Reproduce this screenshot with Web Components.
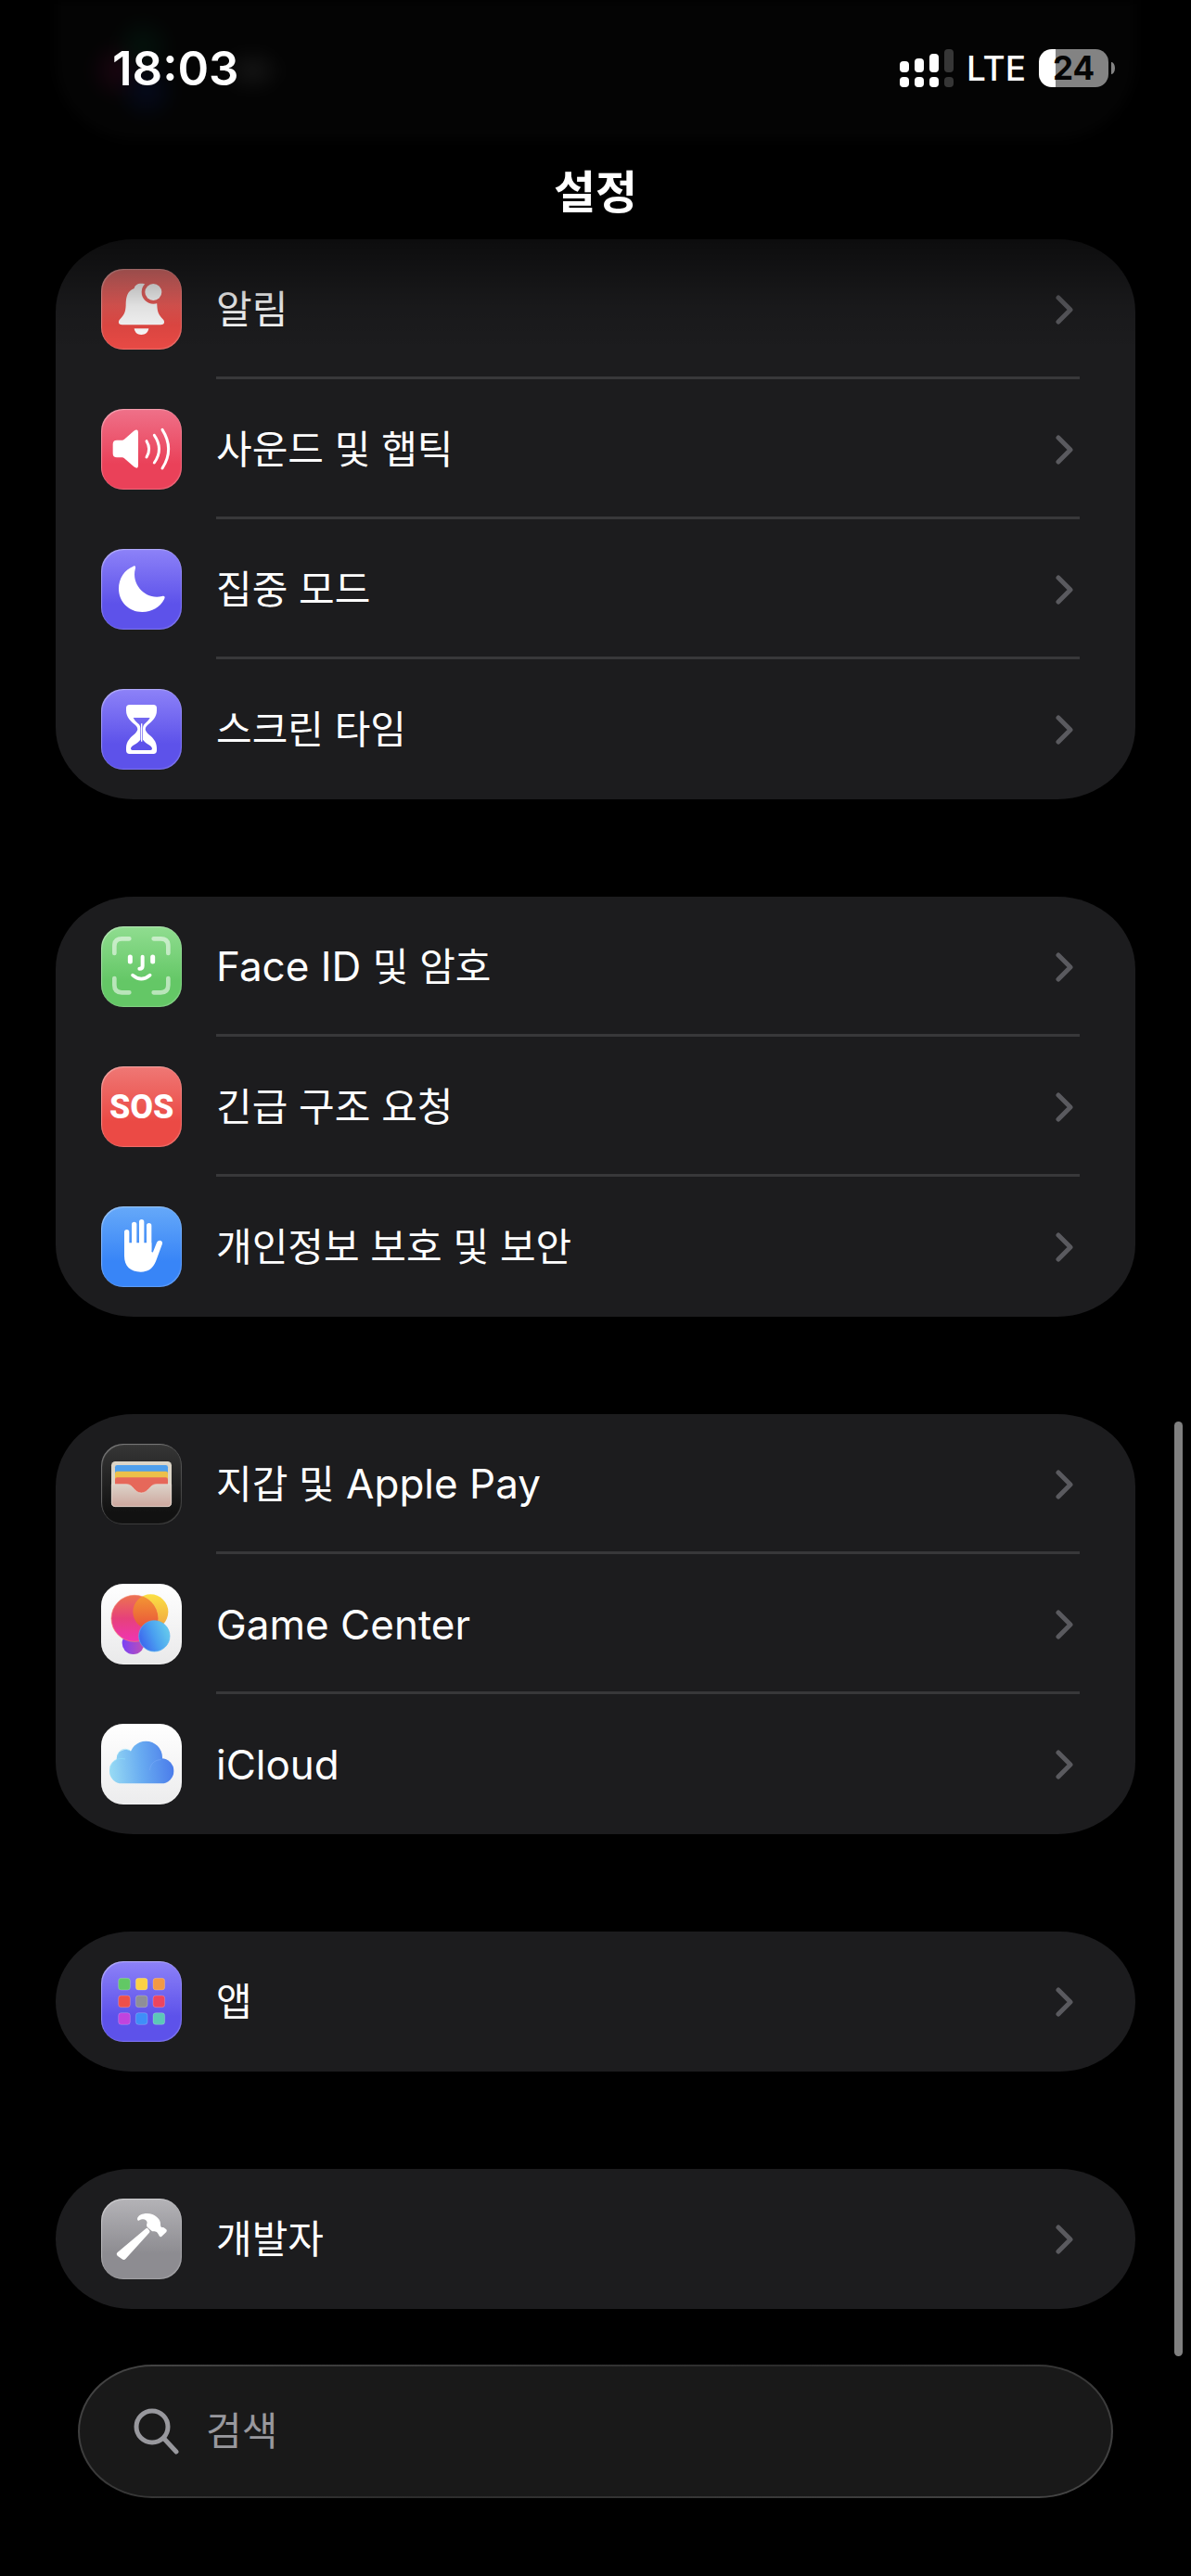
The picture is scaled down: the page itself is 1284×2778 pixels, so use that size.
<!DOCTYPE html>
<html lang="ko">
<head>
<meta charset="utf-8">
<meta name="viewport" content="width=device-width, initial-scale=1">
<title>설정</title>
<style>
    :root {
        --card-color: #1c1c1e;
        --separator-color: #38383a;
        --muted-color: #98989d;
        --hangul-size: 42px;
        --latin-size: 44px;
    }

    body {
        margin: 0;
        background: #000;
        color: #fff;
        font-family: "Inter", "Noto Sans CJK KR", sans-serif;
    }
</style>
</head>
<body>
<settings-screen>
    <status-bar slot="status" time="18:03" network="LTE" battery="24"></status-bar>
    <span slot="title">설정</span>

    <settings-group>
        <settings-row icon="bell"><span lang="ko">알림</span></settings-row>
        <settings-row icon="sound"><span lang="ko">사운드 및 햅틱</span></settings-row>
        <settings-row icon="moon"><span lang="ko">집중 모드</span></settings-row>
        <settings-row icon="hourglass"><span lang="ko">스크린 타임</span></settings-row>
    </settings-group>

    <settings-group>
        <settings-row icon="faceid">Face ID <span lang="ko">및 암호</span></settings-row>
        <settings-row icon="sos"><span lang="ko">긴급 구조 요청</span></settings-row>
        <settings-row icon="hand"><span lang="ko">개인정보 보호 및 보안</span></settings-row>
    </settings-group>

    <settings-group>
        <settings-row icon="wallet"><span lang="ko">지갑 및</span> Apple Pay</settings-row>
        <settings-row icon="game">Game Center</settings-row>
        <settings-row icon="cloud">iCloud</settings-row>
    </settings-group>

    <settings-group>
        <settings-row icon="apps"><span lang="ko">앱</span></settings-row>
    </settings-group>

    <settings-group>
        <settings-row icon="hammer"><span lang="ko">개발자</span></settings-row>
    </settings-group>

    <search-field slot="search" placeholder="검색"></search-field>
</settings-screen>

<script>
// tile background and artwork for every icon, drawn on a 261 x 261 grid
const ICONS = {
    bell: {
        tile: 'linear-gradient(#ee7674, #e94a45 70%)',
        art: `
            <mask id="cut"><rect width="261" height="261" fill="#fff"/><circle cx="169" cy="75" r="38" fill="#000"/></mask>
            <path mask="url(#cut)" d="M68 181C57 181 53 172 61 163C73 151 79 142 80 118C80 90 85 71 107 63C109 53 117 47 130 47C143 47 150 53 153 63C176 71 180 90 181 118C182 142 188 151 200 163C208 172 204 181 193 181Z"/>
            <circle cx="169" cy="75" r="27"/>
            <path d="M107 193H154C152 206 143 213 130 213S109 206 107 193Z"/>`
    },
    sound: {
        tile: 'linear-gradient(#ef7189, #ea4159 68%)',
        art: `
            <path d="M38 114Q38 101 51 101H68Q72 101 75 98L105 72Q120 62 120 76V183Q120 197 106 187L75 160Q72 157 68 157H51Q38 157 38 144Z"/>
            <g fill="none" stroke="#fff" stroke-width="9" stroke-linecap="round">
                <path d="M147 104Q163 130 147 156"/>
                <path d="M172 85Q203 130 172 174"/>
                <path d="M198 67Q238 130 198 192"/>
            </g>`
    },
    moon: {
        tile: 'linear-gradient(#8d82f8, #5d52ea 68%)',
        art: `<path d="M104 56C111 53 113 58 110 66C98 116 145 166 197 153C206 151 208 156 204 163C191 188 165 204 133 204C90 204 57 171 57 129C57 95 76 67 104 56Z"/>`
    },
    hourglass: {
        tile: 'linear-gradient(#8d82f8, #5d52ea 68%)',
        art: `
            <path fill-rule="evenodd" d="M92 51H169Q180 51 180 62V70C180 92 164 106 150 117Q143 123 143 130Q143 137 150 143C166 156 180 169 180 191V199Q180 210 169 210H92Q81 210 81 199V191C81 169 95 156 111 143Q118 137 118 130Q118 123 111 117C97 106 81 92 81 70V62Q81 51 92 51ZM104 93H158C152 104 145 109 139 115Q135 119 135 127V164C144 178 165 182 165 193Q165 198 160 198H101Q96 198 96 193C96 182 118 178 127 164V127Q127 119 123 115C116 109 110 104 104 93Z"/>
            <path d="M129 112H133V170H129Z"/>`
    },
    faceid: {
        tile: 'linear-gradient(#90dd90, #64c766 68%)',
        art: `
            <g fill="none" stroke="#fff" stroke-linecap="round">
                <g stroke-width="14" opacity="0.55">
                    <path d="M43 87V64Q43 40 67 40H91"/>
                    <path d="M170 40H193Q217 40 217 64V87"/>
                    <path d="M217 168V190Q217 214 193 214H170"/>
                    <path d="M91 214H67Q43 214 43 190V168"/>
                </g>
                <path d="M94 99V114M167 99V114" stroke-width="15"/>
                <path d="M134 98V128Q134 137 124 137" stroke-width="12"/>
                <path d="M102 158Q130 182 158 158" stroke-width="11"/>
            </g>`
    },
    sos: {
        tile: 'linear-gradient(#ef7875, #eb4a45 68%)',
        art: `<text x="131" y="169" text-anchor="middle" font-family="Roboto, sans-serif" font-weight="800" font-size="108">SOS</text>`
    },
    hand: {
        tile: 'linear-gradient(#66a9f9, #3885f7 68%)',
        art: `
            <path d="M83 83V140M107 58V140M131 50V140M155 62V140" stroke="#fff" stroke-width="16" stroke-linecap="round"/>
            <path d="M75 118V160C75 194 95 212 128 212C154 212 168 200 177 178L198 121C200 110 186 106 180 117L168 147Q163 152 163 142V118Z"/>`
    },
    wallet: {
        tile: 'linear-gradient(#363636, #111 85%)',
        art: `
            <linearGradient id="pocket" x2="0" y2="1"><stop stop-color="#dcd3c9"/><stop offset="1" stop-color="#cda79e"/></linearGradient>
            <rect x="33" y="57" width="195" height="147" rx="13" fill="#dcd5c7"/>
            <rect x="45" y="69" width="171" height="80" rx="7" fill="#4f9fec"/>
            <rect x="45" y="89" width="171" height="70" rx="7" fill="#ecc04a"/>
            <rect x="45" y="109" width="171" height="60" rx="7" fill="#e6685a"/>
            <path fill="url(#pocket)" stroke="#e6ddd3" stroke-width="2" d="M34 131H83C104 131 107 159 130 159S157 131 178 131H227V191Q227 203 215 203H46Q34 203 34 191Z"/>`
    },
    game: {
        tile: 'linear-gradient(#fff, #e9e9ea)',
        art: `
            <linearGradient id="pink" x2="0" y2="1"><stop stop-color="#ec7350"/><stop offset="0.5" stop-color="#e6417a"/><stop offset="1" stop-color="#f035b4"/></linearGradient>
            <linearGradient id="gold" x2="0" y2="1"><stop stop-color="#fbe044"/><stop offset="1" stop-color="#f0a040"/></linearGradient>
            <linearGradient id="orange" x2="0" y2="1"><stop stop-color="#f39a33"/><stop offset="1" stop-color="#e9503b"/></linearGradient>
            <linearGradient id="violet"><stop stop-color="#7a42f5"/><stop offset="1" stop-color="#c04fb4"/></linearGradient>
            <linearGradient id="blue" x1="0" y1="0.7" x2="1" y2="0.3"><stop stop-color="#3c62ee"/><stop offset="0.5" stop-color="#4aa0f0"/><stop offset="1" stop-color="#67cdec"/></linearGradient>
            <clipPath id="lens"><circle cx="108" cy="112" r="76"/></clipPath>
            <circle cx="104" cy="192" r="36" fill="url(#violet)"/>
            <circle cx="160" cy="91" r="57" fill="url(#gold)"/>
            <circle cx="108" cy="112" r="75" fill="url(#pink)" stroke="#f4836f" stroke-width="2"/>
            <circle cx="160" cy="91" r="57" fill="url(#orange)" clip-path="url(#lens)"/>
            <circle cx="172" cy="169" r="50" fill="url(#blue)" stroke="#58b4f2" stroke-width="2"/>`
    },
    cloud: {
        tile: 'linear-gradient(#fff, #ececed)',
        art: `
            <linearGradient id="sky" gradientUnits="userSpaceOnUse" x1="27" y1="150" x2="235" y2="130"><stop stop-color="#98dbf4"/><stop offset="0.5" stop-color="#68abf1"/><stop offset="1" stop-color="#4a7bea"/></linearGradient>
            <g fill="url(#sky)">
                <circle cx="80" cy="113" r="30"/>
                <circle cx="145" cy="109" r="53"/>
                <rect x="27" y="112" width="208" height="81" rx="40"/>
                <rect x="70" y="100" width="125" height="80"/>
            </g>
            <path d="M29 140C34 119 55 108 78 114M53 105C56 78 86 77 96 90" fill="none" stroke="#8fe0fa" stroke-width="3" opacity="0.6"/>
            <path d="M157 150C160 128 174 116 194 116" fill="none" stroke="#7aaaf6" stroke-width="3" opacity="0.6"/>`
    },
    apps: {
        tile: 'linear-gradient(#8d82f8, #5d52ea 68%)',
        art: [
            ['#62c865', '#fbd145', '#f29945'],
            ['#ee504b', '#8f8f98', '#ee455f'],
            ['#c044de', '#3f8ef8', '#5cc8b8']
        ].map((line, y) => line.map((color, x) => `
            <rect x="${56 + x * 56}" y="${55 + y * 56}" width="38" height="38" rx="9" fill="${color}" stroke="#fff" stroke-opacity="0.2" stroke-width="3"/>`
        ).join('')).join('')
    },
    hammer: {
        tile: 'linear-gradient(#b4b3b7, #8d8c91 68%)',
        art: `
            <path d="M145 97Q148 94 151 97L156 103Q159 107 156 110L80 194Q74 201 68 196L54 186Q47 180 53 174Z"/>
            <path d="M117 66C119 49 148 44 166 51C184 59 192 70 192 82C192 90 193 94 199 93Q202 92 206 96L211 100Q214 104 211 108L196 122Q192 126 188 121C183 108 177 105 165 106L150 93C146 89 147 83 149 78C147 65 134 64 122 71Q117 72 117 66Z"/>`
    }
};

class StatusBar extends HTMLElement {
    constructor() {
        super();
        this.attachShadow({ mode: 'open' });
    }

    connectedCallback() {
        this.shadowRoot.innerHTML = `
            <style>
                :host {
                    display: flex;
                    align-items: center;
                    justify-content: space-between;
                    height: 146px;
                    padding: 0 82px 0 121px;
                    line-height: 1;
                }

                time {
                    font-size: 51px;
                    font-weight: 600;
                }

                .indicators {
                    display: flex;
                    align-items: center;
                    gap: 14px;
                }

                .network {
                    font-size: 37px;
                    font-weight: 500;
                }

                .battery {
                    display: flex;
                    align-items: center;
                    gap: 3px;
                }

                .level {
                    width: 75px;
                    border-radius: 14px;
                    background: linear-gradient(to right, #fff ${this.getAttribute('battery')}%, #838383 0);
                    color: #050505;
                    font-size: 35px;
                    font-weight: 700;
                    line-height: 41px;
                    text-align: center;
                }

                .tip {
                    width: 4px;
                    height: 13px;
                    border-radius: 0 4px 4px 0 / 0 7px 7px 0;
                    background: #838383;
                }
            </style>
            <time>${this.getAttribute('time')}</time>
            <div class="indicators">
                <svg width="58" height="41" fill="#fff" aria-hidden="true">
                    <rect y="13" width="10" height="12" rx="4"/>
                    <rect x="16" y="10" width="10" height="15" rx="4"/>
                    <rect x="32" y="5" width="10" height="20" rx="4"/>
                    <rect x="48" width="10" height="25" rx="4" opacity="0.2"/>
                    <rect y="30" width="10" height="11" rx="4"/>
                    <rect x="16" y="30" width="10" height="11" rx="4"/>
                    <rect x="32" y="30" width="10" height="11" rx="4"/>
                    <rect x="48" y="30" width="10" height="11" rx="4" opacity="0.2"/>
                </svg>
                <span class="network">${this.getAttribute('network')}</span>
                <div class="battery">
                    <span class="level">${this.getAttribute('battery')}</span>
                    <span class="tip"></span>
                </div>
            </div>
        `;
    }
}

class SettingsIcon extends HTMLElement {
    constructor() {
        super();
        this.attachShadow({ mode: 'open' });
    }

    connectedCallback() {
        const icon = ICONS[this.getAttribute('name')];
        this.shadowRoot.innerHTML = `
            <style>
                :host {
                    display: block;
                    width: 87px;
                    height: 87px;
                    border-radius: 24px;
                    background: ${icon.tile};
                    box-shadow: inset 1px 1px 1px rgba(255, 255, 255, 0.35), inset -1px -1px 1px rgba(255, 255, 255, 0.2);
                }

                svg {
                    display: block;
                    width: 100%;
                    height: 100%;
                }
            </style>
            <svg viewBox="0 0 261 261" fill="#fff" aria-hidden="true">${icon.art}</svg>
        `;
    }
}

class SettingsRow extends HTMLElement {
    constructor() {
        super();
        this.attachShadow({ mode: 'open' });
    }

    connectedCallback() {
        this.shadowRoot.innerHTML = `
            <style>
                :host {
                    display: block;
                    --line: var(--separator-color);
                }

                :host(:last-child) {
                    --line: transparent;
                }

                a {
                    display: flex;
                    align-items: center;
                    gap: 37px;
                    padding: 0 60px 0 49px;
                    color: inherit;
                    text-decoration: none;
                }

                .content {
                    display: flex;
                    flex: 1;
                    align-items: center;
                    justify-content: space-between;
                    height: 151px;
                    padding-right: 7px;
                    box-shadow: inset 0 -3px var(--line);
                }

                .label {
                    font-size: var(--latin-size);
                    line-height: 60px;
                }

                ::slotted([lang="ko"]) {
                    font-size: var(--hangul-size);
                }
            </style>
            <a href="#${this.getAttribute('icon')}">
                <settings-icon name="${this.getAttribute('icon')}"></settings-icon>
                <span class="content">
                    <span class="label"><slot></slot></span>
                    <svg width="19" height="32" fill="none" stroke="#5a5a5f" stroke-width="5" stroke-linecap="round" stroke-linejoin="round" aria-hidden="true">
                        <path d="M3 3L16 16L3 29"/>
                    </svg>
                </span>
            </a>
        `;
    }
}

class SettingsGroup extends HTMLElement {
    constructor() {
        super();
        this.attachShadow({ mode: 'open' });
        this.shadowRoot.innerHTML = `
            <style>
                :host {
                    display: block;
                    border-radius: 84px / 78px;
                    background: var(--card-color);
                }
            </style>
            <slot></slot>
        `;
    }
}

class SearchField extends HTMLElement {
    constructor() {
        super();
        this.attachShadow({ mode: 'open' });
    }

    connectedCallback() {
        this.shadowRoot.innerHTML = `
            <style>
                :host {
                    display: block;
                }

                label {
                    display: flex;
                    align-items: center;
                    gap: 29px;
                    box-sizing: border-box;
                    height: 144px;
                    padding: 0 58px;
                    border: 2px solid transparent;
                    border-radius: 80px / 72px;
                    background:
                        linear-gradient(#191919, #191919) padding-box,
                        linear-gradient(160deg, #464646, #2c2c2c 50%, #464646) border-box;
                }

                input {
                    flex: 1;
                    min-width: 0;
                    padding: 0;
                    border: 0;
                    outline: 0;
                    background: none;
                    color: #fff;
                    font-family: inherit;
                    font-size: var(--hangul-size);
                    line-height: 60px;
                }

                input::placeholder {
                    color: var(--muted-color);
                    opacity: 1;
                }
            </style>
            <label>
                <svg width="49" height="50" fill="none" stroke="#98989d" stroke-width="5" stroke-linecap="round" aria-hidden="true">
                    <circle cx="20" cy="20" r="17"/>
                    <path d="M33 33L46 47"/>
                </svg>
                <input type="text" placeholder="${this.getAttribute('placeholder')}" aria-label="${this.getAttribute('placeholder')}">
            </label>
        `;
    }
}

class SettingsScreen extends HTMLElement {
    constructor() {
        super();
        this.attachShadow({ mode: 'open' });
        this.shadowRoot.innerHTML = `
            <style>
                :host {
                    display: flex;
                    flex-direction: column;
                    min-height: 100vh;
                }

                header {
                    position: relative;
                    z-index: 1;
                }

                header::after {
                    content: "";
                    position: absolute;
                    top: 100%;
                    left: 0;
                    right: 0;
                    height: 120px;
                    background: linear-gradient(rgba(0, 0, 0, 0.55), rgba(0, 0, 0, 0.12) 60%, transparent);
                    pointer-events: none;
                }

                /* what is left of the group behind the status bar */
                .ghost {
                    position: absolute;
                    z-index: -1;
                    top: 0;
                    left: 60px;
                    right: 60px;
                    height: 150px;
                    border-radius: 0 0 84px 84px;
                    background:
                        radial-gradient(circle 34px at 94px 50px, #04120c, transparent),
                        radial-gradient(circle 34px at 98px 98px, #050a1c, transparent),
                        radial-gradient(circle 34px at 68px 76px, #1a0510, transparent),
                        radial-gradient(ellipse 34px 26px at 212px 76px, #141414, transparent),
                        #040404;
                    filter: blur(6px);
                }

                h1 {
                    margin: 0;
                    padding-top: 12px;
                    font-size: 49px;
                    font-weight: 600;
                    line-height: 100px;
                    text-align: center;
                }

                main {
                    position: relative;
                    display: flex;
                    flex-direction: column;
                    gap: 105px;
                    padding: 0 60px 60px;
                }

                .scrollbar {
                    position: absolute;
                    right: 9px;
                    bottom: 9px;
                    width: 9px;
                    height: 44%;
                    border-radius: 5px;
                    background: #808080;
                }

                footer {
                    padding: 0 84px 84px;
                }
            </style>
            <header>
                <div class="ghost"></div>
                <slot name="status"></slot>
                <h1><slot name="title"></slot></h1>
            </header>
            <main>
                <slot></slot>
                <div class="scrollbar"></div>
            </main>
            <footer><slot name="search"></slot></footer>
        `;
    }
}

customElements.define('status-bar', StatusBar);
customElements.define('settings-icon', SettingsIcon);
customElements.define('settings-row', SettingsRow);
customElements.define('settings-group', SettingsGroup);
customElements.define('search-field', SearchField);
customElements.define('settings-screen', SettingsScreen);
</script>
</body>
</html>
